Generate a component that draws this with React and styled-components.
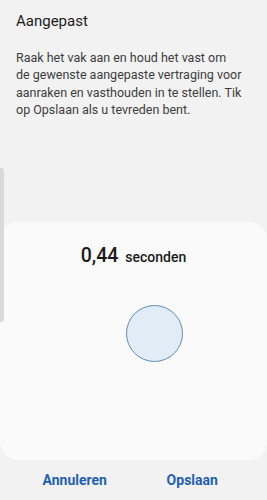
import React from 'react'
import styled, { createGlobalStyle } from 'styled-components'

const Global = createGlobalStyle`
    html, body {
        margin: 0;
        padding: 0;
        background: #f2f2f2;
    }
    body {
        font-family: Roboto, "Liberation Sans", sans-serif;
    }
`

const App = () => {
    return (
        <Screen>
            <Global />
            <EdgeHandle />
            <Header>
                <Title>Aangepast</Title>
                <Description>
                    Raak het vak aan en houd het vast om<br />
                    de gewenste aangepaste vertraging voor<br />
                    aanraken en vasthouden in te stellen. Tik<br />
                    op Opslaan als u tevreden bent.
                </Description>
            </Header>
            <Card>
                <Value>
                    <Number>0,44</Number>
                    <Unit>seconden</Unit>
                </Value>
                <TouchArea>
                    <Circle />
                </TouchArea>
            </Card>
            <Actions>
                <ActionButton>Annuleren</ActionButton>
                <ActionButton>Opslaan</ActionButton>
            </Actions>
        </Screen>
    )
}

const Screen = styled.div`
    position: relative;
    width: 267px;
    height: 500px;
    background: #f2f2f2;
    display: flex;
    flex-direction: column;
    overflow: hidden;
`

const EdgeHandle = styled.div`
    position: absolute;
    left: 0;
    top: 168px;
    width: 4px;
    height: 154px;
    background: #dadada;
    border-radius: 0 3px 3px 0;
    z-index: 2;
`

const Header = styled.div`
    padding: 12px 16px 0;
    height: 210px;
    box-sizing: border-box;
`

const Title = styled.h1`
    margin: 0;
    font-size: 15px;
    font-weight: 400;
    color: #1c1c1c;
    line-height: 18px;
`

const Description = styled.p`
    margin: 19px 0 0;
    font-size: 12.5px;
    line-height: 17.3px;
    color: #3d3d3d;
    white-space: nowrap;
`

const Card = styled.div`
    height: 238px;
    margin-top: 12px;
    background: #fafafa;
    border-radius: 18px;
    display: flex;
    flex-direction: column;
    align-items: center;
`

const Value = styled.div`
    display: flex;
    align-items: baseline;
    gap: 7px;
    margin-top: 22px;
    color: #1a1a1a;
`

const Number = styled.span`
    font-size: 19.5px;
    font-weight: 500;
`

const Unit = styled.span`
    font-size: 14px;
    font-weight: 500;
`

const TouchArea = styled.div`
    margin-top: 38px;
    margin-left: 41px;
`

const Circle = styled.div`
    width: 55px;
    height: 55px;
    border-radius: 50%;
    background: #e2ecf7;
    border: 1px solid #5d8dbb;
`

const Actions = styled.div`
    flex: 1;
    display: grid;
    grid-template-columns: 1fr 1fr;
    padding: 0 16px;
    align-items: center;
`

const ActionButton = styled.button`
    border: none;
    background: none;
    font-family: Roboto, "Liberation Sans", sans-serif;
    font-size: 14px;
    font-weight: 700;
    color: #1f5fb3;
    padding: 0;
    cursor: pointer;
`

export default App
